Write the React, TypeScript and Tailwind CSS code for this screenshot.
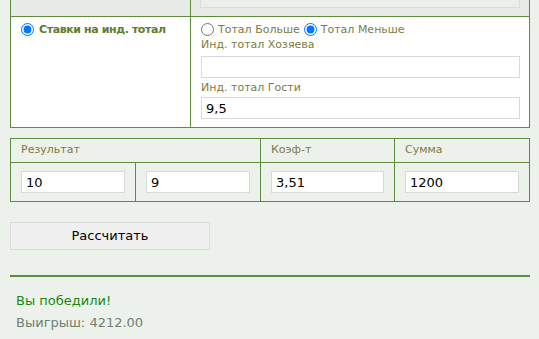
import { useState } from 'react';

const font = { fontFamily: '"DejaVu Sans", Verdana, sans-serif' };

function Field({ value, className = '' }: { value?: string; className?: string }) {
  return (
    <input
      type="text"
      defaultValue={value}
      className={`block h-[22px] border border-[#d9d9d9] bg-white px-[4px] text-[13px] text-black outline-none ${className}`}
      style={font}
    />
  );
}

export default function App() {
  const [mode, setMode] = useState<'over' | 'under'>('under');

  return (
    <div className="min-h-[339px] w-[539px] bg-[#edf1eb] pb-4" style={font}>
      {/* ind. total table (scrolled, top row cut off) */}
      <div className="ml-[10px] w-[520px] border-x border-b border-[#5f8b3b]">
        <div className="grid h-[17px] grid-cols-[180px_1fr] border-b border-[#5f8b3b] bg-[#e6ebe5]">
          <div className="border-r border-[#5f8b3b]" />
          <div className="px-[9px]">
            <div className="h-[8px] border-x border-b border-[#d9dcd8] bg-[#eceeeb]" />
          </div>
        </div>
        <div className="grid h-[110px] grid-cols-[180px_1fr] bg-white">
          <div className="border-r border-[#5f8b3b] pl-[10px] pt-[6px]">
            <label className="flex h-[13px] items-center gap-[5px] text-[11px] font-bold leading-[13px] text-[#5d7d2f]">
              <input type="radio" defaultChecked className="m-0 h-[13px] w-[13px]" />
              <span className="tracking-[-0.4px]">Ставки на инд. тотал</span>
            </label>
          </div>
          <div className="pl-[10px] pr-[9px] pt-[6px] text-[11px] leading-[14px] text-[#7d7b45]">
            <div className="flex h-[13px] items-center">
              <label className="flex items-center gap-[4px]">
                <input
                  type="radio"
                  name="t"
                  checked={mode === 'over'}
                  onChange={() => setMode('over')}
                  className="m-0 h-[13px] w-[13px]"
                />
                <span>Тотал Больше</span>
              </label>
              <label className="ml-[4px] flex items-center gap-[4px]">
                <input
                  type="radio"
                  name="t"
                  checked={mode === 'under'}
                  onChange={() => setMode('under')}
                  className="m-0 h-[13px] w-[13px]"
                />
                <span>Тотал Меньше</span>
              </label>
            </div>
            <div className="mt-[2px]">Инд. тотал Хозяева</div>
            <Field className="mt-[4px] w-full" />
            <div className="mt-[3px]">Инд. тотал Гости</div>
            <Field value="9,5" className="mt-[2px] w-full" />
          </div>
        </div>
      </div>

      {/* result / coef / sum */}
      <div className="ml-[10px] mt-[10px] w-[520px] border border-[#5f8b3b]">
        <div className="grid h-[24px] grid-cols-[250px_134px_1fr] border-b border-[#5f8b3b] text-[11px] text-[#7d7b45]">
          <div className="flex items-center border-r border-[#5f8b3b] pl-[10px]">Результат</div>
          <div className="flex items-center border-r border-[#5f8b3b] pl-[10px]">Коэф-т</div>
          <div className="flex items-center pl-[10px]">Сумма</div>
        </div>
        <div className="grid h-[38px] grid-cols-[125px_125px_134px_1fr]">
          <div className="flex items-center border-r border-[#5f8b3b] px-[10px]">
            <Field value="10" className="w-[104px]" />
          </div>
          <div className="flex items-center border-r border-[#5f8b3b] px-[10px]">
            <Field value="9" className="w-[104px]" />
          </div>
          <div className="flex items-center border-r border-[#5f8b3b] px-[10px]">
            <Field value="3,51" className="w-[113px]" />
          </div>
          <div className="flex items-center px-[10px]">
            <Field value="1200" className="w-[114px]" />
          </div>
        </div>
      </div>

      <button
        type="button"
        className="ml-[10px] mt-[20px] block h-[28px] w-[200px] border border-[#dcdcdc] bg-[#f0f0f0] text-[13px] text-black"
        style={font}
      >
        Рассчитать
      </button>

      <div className="ml-[10px] mt-[25px] h-[2px] w-[520px] bg-[#5f8b3b]" />

      <div className="ml-[16px] mt-[13px] text-[13px] leading-[22px]">
        <div className="text-[#128a12]">Вы победили!</div>
        <div className="text-[#6f7f72]">Выигрыш: 4212.00</div>
      </div>
    </div>
  );
}
